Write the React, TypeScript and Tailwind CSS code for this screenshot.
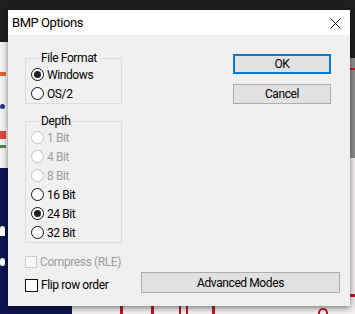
import React from "react";

const font = { fontFamily: 'Roboto, "Noto Sans", sans-serif' };

function Radio({ label, checked = false, disabled = false }: { label: string; checked?: boolean; disabled?: boolean }) {
  return (
    <div className="flex h-[19px] items-center">
      <span
        className={`ml-[5px] flex h-[13px] w-[13px] items-center justify-center rounded-full border bg-white ${
          disabled ? "border-[#c4c4c4]" : "border-[#111]"
        }`}
      >
        {checked && <span className="h-[7px] w-[7px] rounded-full bg-[#222]" />}
      </span>
      <span className={`ml-[3px] text-[12px] leading-none tracking-[-0.4px] ${disabled ? "text-[#9d9d9d]" : "text-black"}`}>
        {label}
      </span>
    </div>
  );
}

function GroupBox({ title, children, className = "" }: { title: string; children: React.ReactNode; className?: string }) {
  return (
    <div className={`relative w-[97px] border border-[#dcdcdc] pt-[6px] ${className}`}>
      <span className="absolute left-[13px] top-[-9px] bg-[#f0f0f0] px-[2px] text-[12px] leading-[16px] tracking-[-0.4px] text-black">
        {title}
      </span>
      {children}
    </div>
  );
}

export default function App() {
  return (
    <div className="relative h-[314px] w-[355px] overflow-hidden bg-[#1e1e1e]" style={font}>
      {/* background desktop content */}
      <div className="absolute left-0 top-[42px] h-[126px] w-[8px] bg-[#f2f2f2]">
        <div className="mt-[30px] h-[4px] w-[6px] bg-[#e2662c]" />
        <div className="mt-[28px] h-[5px] w-[5px] rounded-full bg-[#1e3a8a]" />
        <div className="mt-[22px] h-[8px] w-[6px] bg-[#d9483b]" />
        <div className="mt-[6px] h-[3px] w-[6px] bg-[#3d8a4a]" />
      </div>
      <div className="absolute left-0 top-[168px] h-[146px] w-[8px] bg-[#0d1550]">
        <div className="mt-[58px] h-[10px] w-[5px] rounded-t bg-white" />
        <div className="mt-[22px] h-[8px] w-[5px] rounded bg-white" />
      </div>
      <div className="absolute left-[350px] top-[58px] h-[100px] w-[5px] bg-[#8e8e8e]">
        <div className="mt-[10px] h-[2px] w-[5px] bg-[#c0182a]" />
      </div>
      <div className="absolute left-[350px] top-[158px] h-[156px] w-[5px] bg-[#f4eeee]">
        <div className="mt-[136px] h-[3px] w-[5px] bg-[#c0182a]" />
      </div>
      <div className="absolute left-0 top-[306px] h-[8px] w-[355px] bg-[#f5f1f1]">
        <div className="absolute left-0 top-0 h-[8px] w-[72px] bg-[#0d1550]" />
        <div className="absolute left-[120px] top-0 h-[8px] w-[3px] bg-[#c0182a]" />
        <div className="absolute left-[151px] top-0 h-[8px] w-[3px] bg-[#c0182a]" />
        <div className="absolute left-[179px] top-0 h-[8px] w-[2px] bg-[#c0182a]" />
        <div className="absolute left-[186px] top-0 h-[8px] w-[2px] bg-[#c0182a]" />
        <div className="absolute left-[212px] top-0 h-[8px] w-[3px] bg-[#c0182a]" />
        <div className="absolute left-[318px] top-[2px] h-[6px] w-[10px] rounded-t-full border-2 border-b-0 border-[#c0182a]" />
      </div>

      {/* dialog window */}
      <div className="absolute left-[8px] top-[10px] flex h-[296px] w-[342px] flex-col bg-[#f0f0f0] shadow-[0_2px_6px_rgba(0,0,0,0.5)]">
        <div className="flex h-[25px] items-center justify-between bg-white pl-[4px] pr-[9px]">
          <span className="text-[13px] tracking-[-0.45px] text-black">BMP Options</span>
          <svg width="11" height="11" viewBox="0 0 11 11" className="mt-[1px]">
            <path d="M0.5 0.5 L10.5 10.5 M10.5 0.5 L0.5 10.5" stroke="#111" strokeWidth="1" />
          </svg>
        </div>

        <div className="flex flex-1 flex-col pl-[17px]">
          <div className="flex">
            <div className="flex flex-col pt-[23px]">
              <GroupBox title="File Format">
                <Radio label="Windows" checked />
                <Radio label="OS/2" />
              </GroupBox>
              <GroupBox title="Depth" className="mt-[17px]">
                <Radio label="1 Bit" disabled />
                <Radio label="4 Bit" disabled />
                <Radio label="8 Bit" disabled />
                <Radio label="16 Bit" />
                <Radio label="24 Bit" checked />
                <Radio label="32 Bit" />
              </GroupBox>
            </div>
            <div className="ml-[111px] flex flex-col gap-[10px] pt-[19px]">
              <button className="flex h-[20px] w-[98px] items-center justify-center border-2 border-[#0078d7] bg-[#e1e1e1] text-[12px] leading-none tracking-[-0.4px] text-black">
                OK
              </button>
              <button className="flex h-[20px] w-[98px] items-center justify-center border border-[#adadad] bg-[#e1e1e1] text-[12px] leading-none tracking-[-0.4px] text-black">
                Cancel
              </button>
            </div>
          </div>

          <div className="mt-[13px] flex h-[12px] items-center">
            <span className="h-[12px] w-[12px] border border-[#cccccc] bg-[#f7f7f7]" />
            <span className="ml-[3px] text-[12px] leading-none tracking-[-0.4px] text-[#9d9d9d]">Compress (RLE)</span>
          </div>
          <div className="mt-[4px] grid grid-cols-[116px_199px] items-center">
            <div className="flex items-center pt-[5px]">
              <span className="h-[13px] w-[13px] border border-[#111] bg-white" />
              <span className="ml-[3px] text-[12px] leading-none tracking-[-0.4px] text-black">Flip row order</span>
            </div>
            <button className="flex h-[21px] items-center justify-center border border-[#adadad] bg-[#e1e1e1] text-[12px] leading-none tracking-[-0.4px] text-black">
              Advanced Modes
            </button>
          </div>
        </div>
      </div>
    </div>
  );
}
